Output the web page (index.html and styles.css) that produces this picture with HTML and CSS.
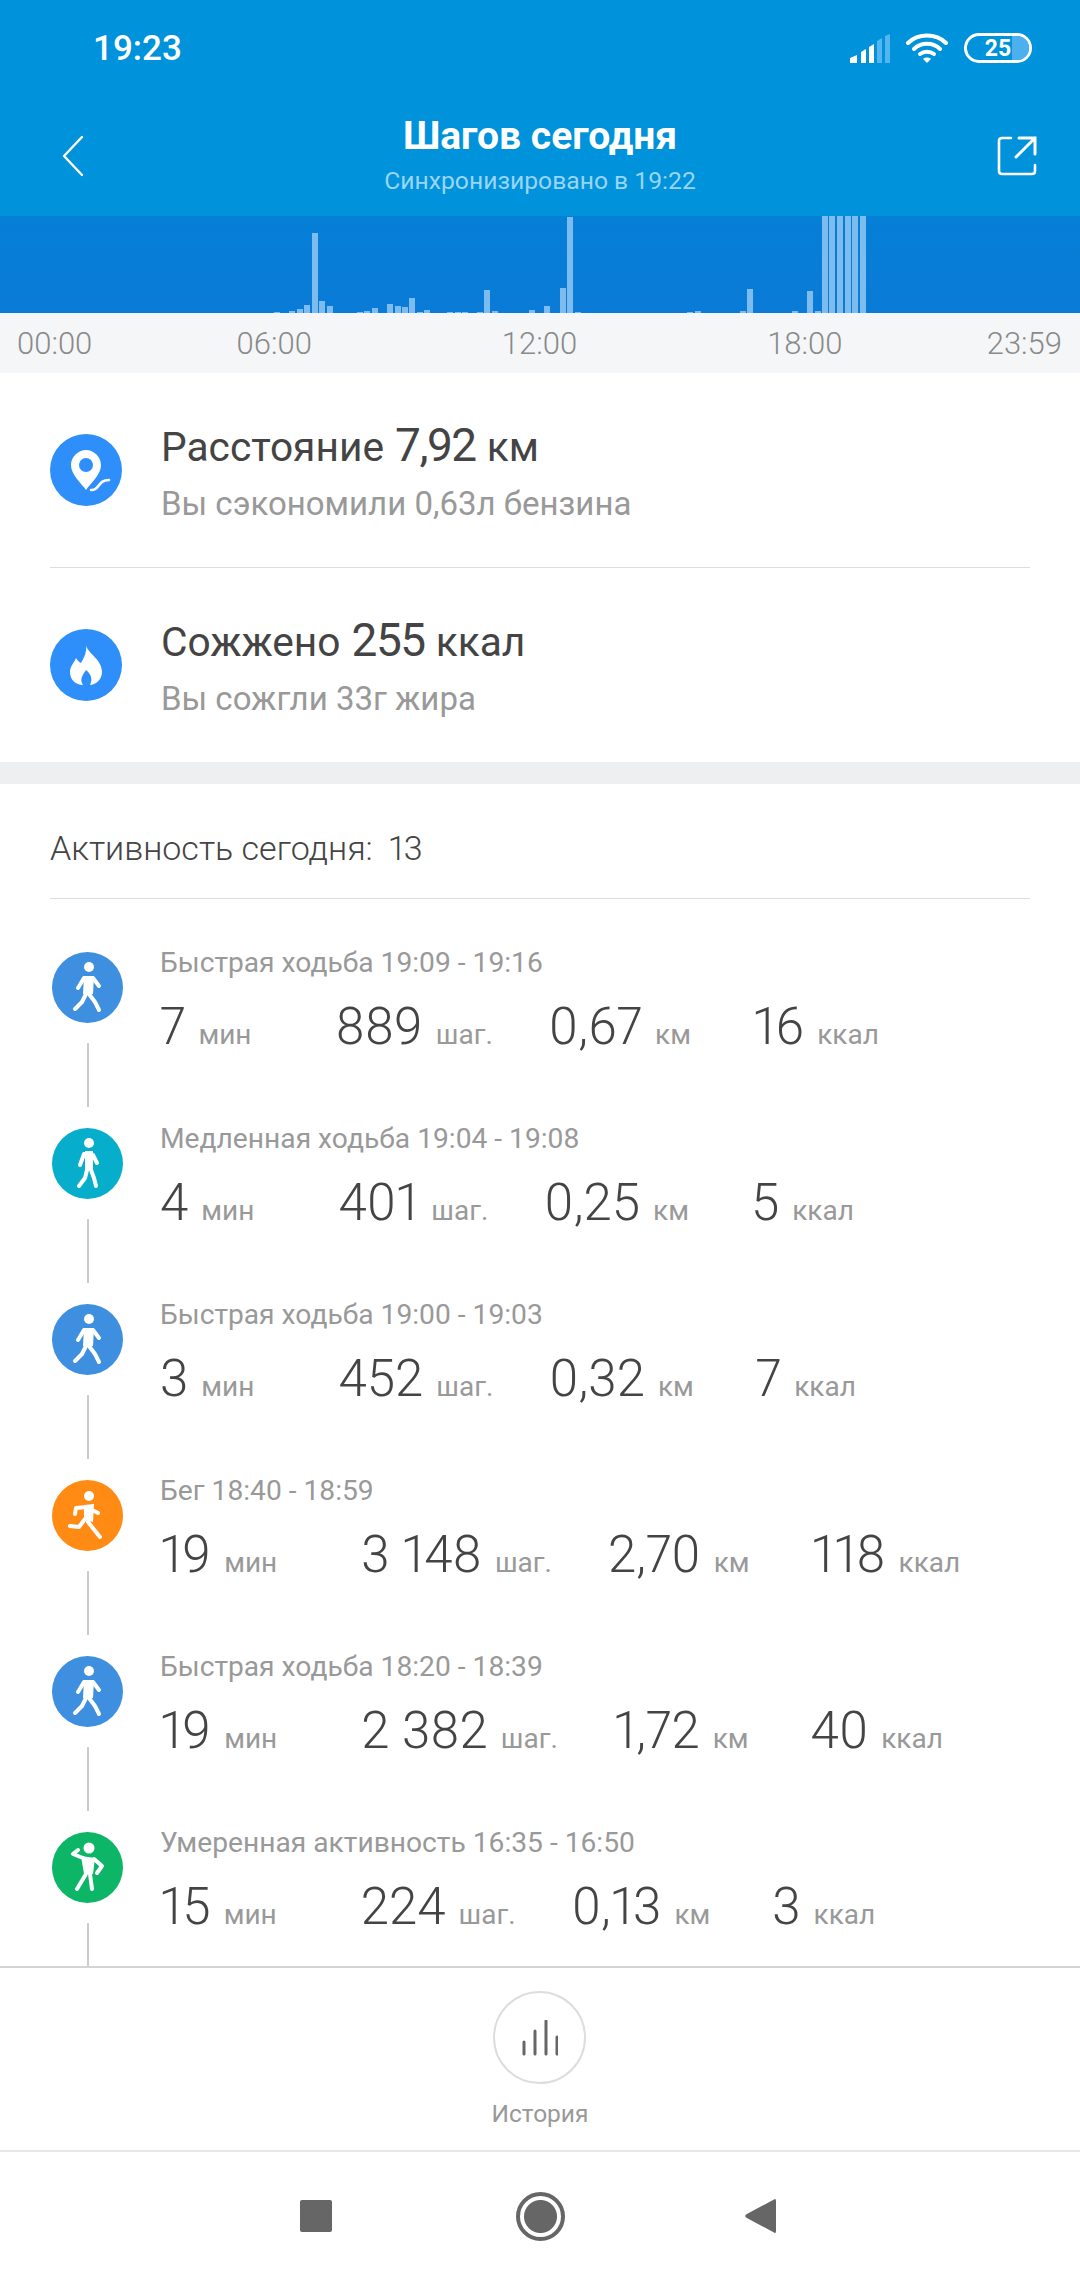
FILE: index.html
```html
<!DOCTYPE html>
<html lang="ru">
<head>
    <meta charset="UTF-8">
    <meta name="viewport" content="width=device-width, initial-scale=1.0">
    <title>Шагов сегодня</title>
    <link rel="stylesheet" href="styles.css">
</head>
<body>
    <svg class="defs" width="0" height="0">
        <symbol id="fast" viewBox="0 0 71 71">
            <circle cx="37" cy="15" r="5" fill="#fff"/>
            <path d="M32 24 L42 24 L41 42 L31 42 Z" fill="#fff"/>
            <g fill="none" stroke="#fff" stroke-width="4" stroke-linecap="round" stroke-linejoin="round">
                <path d="M32 26 L26 36"/>
                <path d="M41 26 L47 34"/>
                <path d="M34 42 L30 50 L23 57"/>
                <path d="M37 42 L43 50 L47 58"/>
            </g>
        </symbol>
        <symbol id="slow" viewBox="0 0 71 71">
            <circle cx="37" cy="15" r="5" fill="#fff"/>
            <path d="M33 23 L41 23 L41 42 L33 42 Z" fill="#fff"/>
            <g fill="none" stroke="#fff" stroke-width="4" stroke-linecap="round" stroke-linejoin="round">
                <path d="M32 26 L28 37"/>
                <path d="M41 27 L45 35"/>
                <path d="M35 42 L33 50 L27 58"/>
                <path d="M39 42 L42 50 L44 58"/>
            </g>
        </symbol>
        <symbol id="run" viewBox="0 0 71 71">
            <circle cx="37" cy="16" r="5" fill="#fff"/>
            <path d="M32 25 L42 24 L41 42 L32 40 Z" fill="#fff"/>
            <g fill="none" stroke="#fff" stroke-width="4" stroke-linecap="round" stroke-linejoin="round">
                <path d="M36 27 L24 28 L23 34"/>
                <path d="M42 31 L46 33"/>
                <path d="M33 39 L27 47 L18 46"/>
                <path d="M36 42 L48 57"/>
            </g>
        </symbol>
        <symbol id="active" viewBox="0 0 71 71">
            <circle cx="37" cy="16" r="5.5" fill="#fff"/>
            <path d="M29 24 L43 26 L41 42 L32 42 Z" fill="#fff"/>
            <g fill="none" stroke="#fff" stroke-width="4" stroke-linecap="round" stroke-linejoin="round">
                <path d="M31 26 L21 22 L26 18"/>
                <path d="M42 27 L50 34 L45 41"/>
                <path d="M34 42 L25 57"/>
                <path d="M38 42 L40 57"/>
            </g>
        </symbol>
    </svg>

    <div class="screen">
        <div class="header">
            <div class="status-bar">
                <span class="clock">19:23</span>
                <div class="status-icons">
                    <svg class="signal" width="40" height="29" viewBox="0 0 40 29">
                        <path d="M0 29 V24 L7 21 V29 Z M11 29 V18 L16 15 V29 Z M19 29 V13 L24 10 V29 Z" fill="#fff"/>
                        <path d="M27 29 V7 L32 4 V29 Z M35 29 V2 L40 0 V29 Z" fill="#55b5ee"/>
                    </svg>
                    <svg class="wifi" width="42" height="30" viewBox="0 0 42 30">
                        <g fill="none" stroke="#fff" stroke-width="4" stroke-linecap="round">
                            <path d="M2 10 C12 0 30 0 40 10"/>
                            <path d="M8 16 C15 9 27 9 34 16"/>
                            <path d="M14 21 C18 18 24 18 28 21"/>
                        </g>
                        <path d="M17 26 C19 24 23 24 25 26 L21 30 Z" fill="#fff"/>
                    </svg>
                    <div class="battery">
                        <span class="battery-fill"></span>
                        <span class="battery-text">25</span>
                    </div>
                </div>
            </div>
            <div class="nav">
                <div class="nav-side">
                    <svg width="22" height="42" viewBox="0 0 22 42"><path d="M20 2 L2 21 L20 40" fill="none" stroke="#fff" stroke-width="2.4" stroke-linecap="round" stroke-linejoin="round"/></svg>
                </div>
                <div class="nav-title">
                    <div class="title">Шагов сегодня</div>
                    <div class="subtitle">Синхронизировано в 19:22</div>
                </div>
                <div class="nav-side nav-side-right">
                    <svg width="40" height="40" viewBox="0 0 40 40">
                        <path d="M14 2 H5 Q2 2 2 5 V35 Q2 38 5 38 H35 Q38 38 38 35 V29" fill="none" stroke="#fff" stroke-width="2.6" stroke-linecap="round"/>
                        <path d="M19 21 L37 3 M22 2 H38 V18" fill="none" stroke="#fff" stroke-width="3" stroke-linecap="round"/>
                    </svg>
                </div>
            </div>
        </div>

        <svg class="chart" width="1080" height="97" viewBox="0 0 1080 97">
            <g fill="#7cbcee">
                <rect x="274" y="96" width="6" height="1"/>
                <rect x="289" y="95" width="6" height="2"/>
                <rect x="297" y="93" width="6" height="4"/>
                <rect x="304" y="89" width="6" height="8"/>
                <rect x="312" y="17" width="6" height="80"/>
                <rect x="319" y="85" width="6" height="12"/>
                <rect x="327" y="90" width="6" height="7"/>
                <rect x="357" y="96" width="6" height="1"/>
                <rect x="364" y="95" width="6" height="2"/>
                <rect x="372" y="92" width="6" height="5"/>
                <rect x="387" y="88" width="6" height="9"/>
                <rect x="395" y="90" width="6" height="7"/>
                <rect x="402" y="91" width="6" height="6"/>
                <rect x="409" y="82" width="6" height="15"/>
                <rect x="417" y="96" width="6" height="1"/>
                <rect x="424" y="94" width="6" height="3"/>
                <rect x="447" y="96" width="6" height="1"/>
                <rect x="455" y="96" width="6" height="1"/>
                <rect x="462" y="96" width="6" height="1"/>
                <rect x="477" y="96" width="6" height="1"/>
                <rect x="484" y="74" width="6" height="23"/>
                <rect x="492" y="95" width="6" height="2"/>
                <rect x="529" y="94" width="6" height="3"/>
                <rect x="544" y="90" width="6" height="7"/>
                <rect x="560" y="72" width="6" height="25"/>
                <rect x="567" y="1" width="6" height="96"/>
                <rect x="575" y="96" width="6" height="1"/>
                <rect x="687" y="96" width="6" height="1"/>
                <rect x="695" y="95" width="6" height="2"/>
                <rect x="740" y="95" width="6" height="2"/>
                <rect x="747" y="73" width="6" height="24"/>
                <rect x="792" y="95" width="6" height="2"/>
                <rect x="807" y="75" width="6" height="22"/>
                <rect x="815" y="95" width="6" height="2"/>
                <rect x="822" y="0" width="6" height="97"/>
                <rect x="829" y="0" width="6" height="97"/>
                <rect x="837" y="0" width="6" height="97"/>
                <rect x="845" y="0" width="6" height="97"/>
                <rect x="852" y="0" width="6" height="97"/>
                <rect x="860" y="0" width="6" height="97"/>
            </g>
        </svg>

        <div class="ticks">
            <span>00:00</span>
            <div class="ticks-mid">
                <span>06:00</span>
                <span>12:00</span>
                <span>18:00</span>
            </div>
            <span>23:59</span>
        </div>

        <div class="stats">
            <div class="stat stat-first">
                <svg class="stat-icon" width="72" height="72" viewBox="0 0 72 72">
                    <circle cx="36" cy="36" r="36" fill="#2e8ffa"/>
                    <path d="M36 16 C44 16 51 23 51 31 C51 41 40 50 36 56 C32 50 21 41 21 31 C21 23 28 16 36 16 Z" fill="#fff"/>
                    <circle cx="36" cy="31" r="7" fill="#2e8ffa"/>
                    <path d="M41 56 C50 57 47 46 59 46" fill="none" stroke="#fff" stroke-width="2.6" stroke-linecap="round"/>
                </svg>
                <div class="stat-text">
                    <div class="stat-title">Расстояние <b>7,92</b> км</div>
                    <div class="stat-note">Вы сэкономили 0,63л бензина</div>
                </div>
            </div>
            <div class="stat">
                <svg class="stat-icon" width="72" height="72" viewBox="0 0 72 72">
                    <circle cx="36" cy="36" r="36" fill="#2e8ffa"/>
                    <path d="M36 16 C37 24 52 30 52 43 C52 51 45 56 40 56 C43 50 41 45 36 41 C33 46 29 50 33 56 C26 56 20 51 20 43 C20 37 24 34 26 29 C28 32 29 33 31 34 C34 29 37 23 36 16 Z" fill="#fff"/>
                </svg>
                <div class="stat-text">
                    <div class="stat-title">Сожжено <b>255</b> ккал</div>
                    <div class="stat-note">Вы сожгли 33г жира</div>
                </div>
            </div>
        </div>

        <div class="activity-head">Активность сегодня:<span class="activity-count">13</span></div>

        <div class="activity-list">
            <div class="activity">
                <div class="track">
                    <svg class="badge badge-fast" width="71" height="71"><use href="#fast"/></svg>
                    <div class="track-line"></div>
                </div>
                <div class="activity-body">
                    <div class="activity-title">Быстрая ходьба 19:09 - 19:16</div>
                    <div class="cells">
                        <div class="cell cell-time"><span class="num">7</span><span class="unit">мин</span></div>
                        <div class="cell cell-steps"><span class="num">889</span><span class="unit">шаг.</span></div>
                        <div class="cell cell-dist"><span class="num">0,67</span><span class="unit">км</span></div>
                        <div class="cell"><span class="num">16</span><span class="unit">ккал</span></div>
                    </div>
                </div>
            </div>
            <div class="activity">
                <div class="track">
                    <svg class="badge badge-slow" width="71" height="71"><use href="#slow"/></svg>
                    <div class="track-line"></div>
                </div>
                <div class="activity-body">
                    <div class="activity-title">Медленная ходьба 19:04 - 19:08</div>
                    <div class="cells">
                        <div class="cell cell-time"><span class="num">4</span><span class="unit">мин</span></div>
                        <div class="cell cell-steps"><span class="num">401</span><span class="unit">шаг.</span></div>
                        <div class="cell cell-dist"><span class="num">0,25</span><span class="unit">км</span></div>
                        <div class="cell"><span class="num">5</span><span class="unit">ккал</span></div>
                    </div>
                </div>
            </div>
            <div class="activity">
                <div class="track">
                    <svg class="badge badge-fast" width="71" height="71"><use href="#fast"/></svg>
                    <div class="track-line"></div>
                </div>
                <div class="activity-body">
                    <div class="activity-title">Быстрая ходьба 19:00 - 19:03</div>
                    <div class="cells">
                        <div class="cell cell-time"><span class="num">3</span><span class="unit">мин</span></div>
                        <div class="cell cell-steps"><span class="num">452</span><span class="unit">шаг.</span></div>
                        <div class="cell cell-dist"><span class="num">0,32</span><span class="unit">км</span></div>
                        <div class="cell"><span class="num">7</span><span class="unit">ккал</span></div>
                    </div>
                </div>
            </div>
            <div class="activity">
                <div class="track">
                    <svg class="badge badge-run" width="71" height="71"><use href="#run"/></svg>
                    <div class="track-line"></div>
                </div>
                <div class="activity-body">
                    <div class="activity-title">Бег 18:40 - 18:59</div>
                    <div class="cells">
                        <div class="cell cell-time"><span class="num">19</span><span class="unit">мин</span></div>
                        <div class="cell cell-steps"><span class="num">3 148</span><span class="unit">шаг.</span></div>
                        <div class="cell cell-dist"><span class="num">2,70</span><span class="unit">км</span></div>
                        <div class="cell"><span class="num">118</span><span class="unit">ккал</span></div>
                    </div>
                </div>
            </div>
            <div class="activity">
                <div class="track">
                    <svg class="badge badge-fast" width="71" height="71"><use href="#fast"/></svg>
                    <div class="track-line"></div>
                </div>
                <div class="activity-body">
                    <div class="activity-title">Быстрая ходьба 18:20 - 18:39</div>
                    <div class="cells">
                        <div class="cell cell-time"><span class="num">19</span><span class="unit">мин</span></div>
                        <div class="cell cell-steps"><span class="num">2 382</span><span class="unit">шаг.</span></div>
                        <div class="cell cell-dist"><span class="num">1,72</span><span class="unit">км</span></div>
                        <div class="cell"><span class="num">40</span><span class="unit">ккал</span></div>
                    </div>
                </div>
            </div>
            <div class="activity">
                <div class="track">
                    <svg class="badge badge-active" width="71" height="71"><use href="#active"/></svg>
                    <div class="track-line"></div>
                </div>
                <div class="activity-body">
                    <div class="activity-title">Умеренная активность 16:35 - 16:50</div>
                    <div class="cells">
                        <div class="cell cell-time"><span class="num">15</span><span class="unit">мин</span></div>
                        <div class="cell cell-steps"><span class="num">224</span><span class="unit">шаг.</span></div>
                        <div class="cell cell-dist"><span class="num">0,13</span><span class="unit">км</span></div>
                        <div class="cell"><span class="num">3</span><span class="unit">ккал</span></div>
                    </div>
                </div>
            </div>
        </div>

        <div class="history">
            <div class="history-circle">
                <svg width="36" height="36" viewBox="0 0 36 36">
                    <path d="M2 22 V34 M13 11 V34 M24 1 V34 M35 17 V34" fill="none" stroke="#666" stroke-width="3" stroke-linecap="round"/>
                </svg>
            </div>
            <div class="history-label">История</div>
        </div>

        <div class="sys-nav">
            <span class="sys-square"></span>
            <span class="sys-circle"></span>
            <svg width="31" height="36" viewBox="0 0 31 36"><path d="M29 1.5 Q31 0 31 3 V33 Q31 36 29 34.5 L1 19.5 Q-0.5 18 1 16.5 Z" fill="#666"/></svg>
        </div>
    </div>
</body>
</html>
```

FILE: styles.css
```css
body {
    margin: 0;
    padding: 0;
    font-family: Roboto, "Noto Sans", sans-serif;
    background-color: #fff;
}
.defs {
    display: block;
    height: 0;
}
.screen {
    width: 1080px;
    height: 2280px;
    display: flex;
    flex-direction: column;
    overflow: hidden;
}

/* header */
.header {
    height: 216px;
    background-color: #0092da;
    color: #fff;
}
.status-bar {
    height: 96px;
    padding: 0 48px 0 93px;
    display: flex;
    align-items: center;
    justify-content: space-between;
}
.clock {
    font-size: 35px;
    font-weight: 500;
}
.status-icons {
    display: flex;
    align-items: center;
    gap: 16px;
}
.battery {
    width: 68px;
    height: 30px;
    box-sizing: border-box;
    border: 3px solid #fff;
    border-radius: 15px;
    position: relative;
    display: flex;
    align-items: center;
    justify-content: center;
    overflow: hidden;
}
.battery-fill {
    position: absolute;
    top: 0;
    right: 0;
    bottom: 0;
    width: 17px;
    background-color: #4db0ee;
}
.battery-text {
    position: relative;
    font-size: 23px;
    font-weight: 700;
}
.nav {
    height: 120px;
    display: flex;
    align-items: center;
}
.nav-side {
    width: 200px;
    padding-left: 62px;
    box-sizing: border-box;
    display: flex;
}
.nav-side-right {
    padding: 0 43px 0 0;
    justify-content: flex-end;
}
.nav-title {
    flex: 1;
    text-align: center;
}
.title {
    font-size: 39px;
    font-weight: 700;
    line-height: 44px;
}
.subtitle {
    font-size: 24.7px;
    line-height: 34px;
    margin-top: 6px;
    color: #9ad5f5;
}

/* chart */
.chart {
    display: block;
    flex-shrink: 0;
    background: linear-gradient(#067fd7, #0a7bd6);
}
.ticks {
    height: 60px;
    flex-shrink: 0;
    padding: 0 18px 0 17px;
    display: flex;
    align-items: center;
    justify-content: space-between;
    background-color: #f5f6f8;
    color: #8a8a8a;
    font-size: 31px;
    font-weight: 300;
}
.ticks-mid {
    display: flex;
    gap: 190px;
}

/* distance and calories */
.stats {
    padding: 0 50px;
    border-bottom: 22px solid #eeeff1;
}
.stat {
    height: 194px;
    display: flex;
    align-items: center;
}
.stat-first {
    border-bottom: 1px solid #ddd;
}
.stat-icon {
    margin-right: 39px;
}
.stat-text {
    padding-top: 3px;
}
.stat-title {
    font-size: 40.7px;
    line-height: 52px;
    color: #444;
}
.stat-title b {
    font-size: 46px;
    font-weight: 400;
    letter-spacing: -1.5px;
    margin: 0 1px;
}
.stat-note {
    font-size: 33px;
    line-height: 42px;
    margin-top: 10px;
    color: #999;
}

/* activity list */
.activity-head {
    height: 115px;
    box-sizing: border-box;
    padding-top: 14px;
    margin: 0 50px;
    display: flex;
    align-items: center;
    border-bottom: 1px solid #ddd;
    font-size: 34px;
    font-weight: 300;
    color: #444;
}
.activity-count {
    margin-left: 16px;
    font-variant-numeric: proportional-nums;
}
.activity-list {
    flex: 1;
    min-height: 0;
    overflow: hidden;
    padding: 53px 0 0 52px;
}
.activity {
    height: 176px;
    display: flex;
}
.track {
    width: 71px;
    margin-right: 37px;
    display: flex;
    flex-direction: column;
    align-items: center;
}
.badge {
    display: block;
    border-radius: 50%;
    flex-shrink: 0;
}
.badge-fast {
    background-color: #3f8fe0;
}
.badge-slow {
    background-color: #07aecb;
}
.badge-run {
    background-color: #ff8a14;
}
.badge-active {
    background-color: #0db566;
}
.track-line {
    width: 2px;
    height: 64px;
    flex-shrink: 0;
    margin-top: 20px;
    background-color: #ccc;
}
.activity-title {
    font-size: 28.2px;
    line-height: 32px;
    margin-top: -5px;
    color: #999;
}
.cells {
    display: flex;
    align-items: baseline;
    margin-top: 18px;
}
.cell-time {
    margin-right: 84px;
}
.cell-steps {
    margin-right: 56px;
}
.cell-dist {
    margin-right: 62px;
}
.num {
    font-size: 51px;
    font-weight: 300;
    font-variant-numeric: proportional-nums;
    color: #444;
}
.unit {
    font-size: 28px;
    margin-left: 13px;
    color: #999;
}

/* bottom */
.history {
    height: 186px;
    flex-shrink: 0;
    box-sizing: border-box;
    border-top: 2px solid #d4d4d4;
    border-bottom: 2px solid #e8e8e8;
    padding-top: 23px;
    display: flex;
    flex-direction: column;
    align-items: center;
}
.history-circle {
    width: 93px;
    height: 93px;
    margin-right: 1px;
    box-sizing: border-box;
    border: 2px solid #ddd;
    border-radius: 50%;
    display: flex;
    align-items: center;
    justify-content: center;
}
.history-label {
    margin-top: 15px;
    font-size: 24.5px;
    color: #999;
}
.sys-nav {
    height: 128px;
    flex-shrink: 0;
    padding-right: 4px;
    display: flex;
    align-items: center;
    justify-content: center;
}
.sys-square {
    width: 32px;
    height: 32px;
    border-radius: 2px;
    background-color: #666;
}
.sys-circle {
    width: 49px;
    height: 49px;
    margin: 0 180px 0 184px;
    box-sizing: border-box;
    border: 4px solid #666;
    border-radius: 50%;
    background: radial-gradient(circle, #666 0 16px, #fff 17px);
}
```
